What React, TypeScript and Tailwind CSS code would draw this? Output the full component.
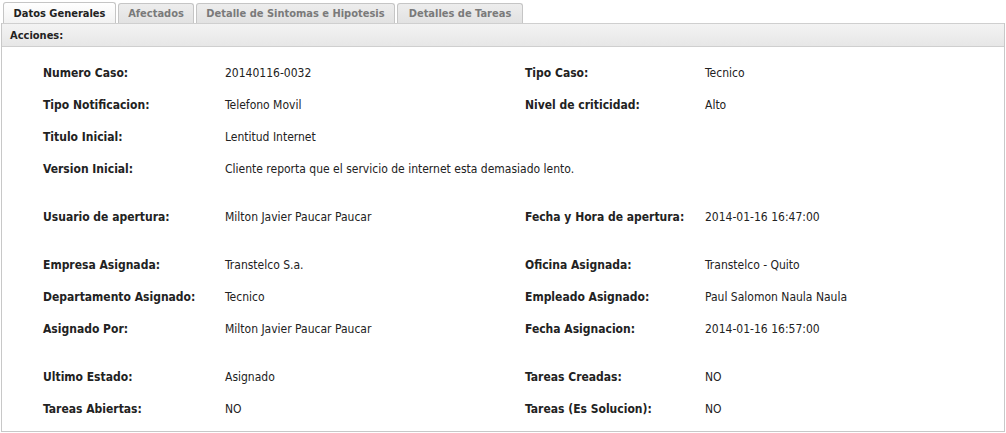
const tabs = [
  { label: "Datos Generales", active: true, w: "w-[113px]" },
  { label: "Afectados", active: false, w: "w-[76px]" },
  { label: "Detalle de Sintomas e Hipotesis", active: false, w: "w-[199px]" },
  { label: "Detalles de Tareas", active: false, w: "w-[126px]" },
];

type Row = [string, string, string?, string?];

const groups: { mt: string; rows: Row[] }[] = [
  {
    mt: "mt-0",
    rows: [
      ["Numero Caso:", "20140116-0032", "Tipo Caso:", "Tecnico"],
      ["Tipo Notificacion:", "Telefono Movil", "Nivel de criticidad:", "Alto"],
      ["Titulo Inicial:", "Lentitud Internet"],
      ["Version Inicial:", "Cliente reporta que el servicio de internet esta demasiado lento."],
    ],
  },
  {
    mt: "mt-4",
    rows: [["Usuario de apertura:", "Milton Javier Paucar Paucar", "Fecha y Hora de apertura:", "2014-01-16 16:47:00"]],
  },
  {
    mt: "mt-4",
    rows: [
      ["Empresa Asignada:", "Transtelco S.a.", "Oficina Asignada:", "Transtelco - Quito"],
      ["Departamento Asignado:", "Tecnico", "Empleado Asignado:", "Paul Salomon Naula Naula"],
      ["Asignado Por:", "Milton Javier Paucar Paucar", "Fecha Asignacion:", "2014-01-16 16:57:00"],
    ],
  },
  {
    mt: "mt-4",
    rows: [
      ["Ultimo Estado:", "Asignado", "Tareas Creadas:", "NO"],
      ["Tareas Abiertas:", "NO", "Tareas (Es Solucion):", "NO"],
    ],
  },
];

function InfoRow({ row }: { row: Row }) {
  const [l1, v1, l2, v2] = row;
  return (
    <div className="flex h-8 items-center">
      <div className="w-[182px] font-bold text-[#222]">{l1}</div>
      <div className="w-[300px] text-[#222] whitespace-nowrap">{v1}</div>
      <div className="w-[180px] font-bold text-[#222]">{l2}</div>
      <div className="text-[#222]">{v2}</div>
    </div>
  );
}

export default function App() {
  return (
    <div
      className="w-[1006px] h-[433px] bg-white text-[12px] leading-none"
      style={{ fontFamily: '"DejaVu Sans Condensed", "DejaVu Sans", sans-serif' }}
    >
      <div className="flex gap-[2px] pl-[3px] pt-[3px] h-[23px] items-end text-[11px]">
        {tabs.map((t) => (
          <div
            key={t.label}
            className={`${t.w} h-[20px] flex items-center justify-center font-bold rounded-t-[3px] border border-b-0 border-[#c5c5c5] ${
              t.active
                ? "bg-gradient-to-b from-white to-[#f2f2f2] text-[#222] h-[21px]"
                : "bg-gradient-to-b from-[#ededed] to-[#e2e2e2] text-[#7a7a7a]"
            }`}
          >
            {t.label}
          </div>
        ))}
      </div>
      <div className="mx-[1px] h-[409px] border border-t-0 border-[#c8c8c8]">
        <div className="h-[24px] flex items-center pl-[8px] text-[11px] font-bold text-[#222] border-t border-b border-[#cfcfcf] bg-gradient-to-b from-[#f3f3f3] to-[#e7e7e7]">
          Acciones:
        </div>
        <div className="pl-[41px] pt-[10px]">
          {groups.map((g, i) => (
            <div key={i} className={g.mt}>
              {g.rows.map((r) => (
                <InfoRow key={r[0]} row={r} />
              ))}
            </div>
          ))}
        </div>
      </div>
    </div>
  );
}
